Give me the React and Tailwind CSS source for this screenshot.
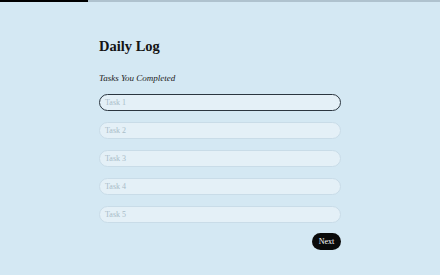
import React from "react";

export default function App() {
  const serif = { fontFamily: '"Liberation Serif", "DejaVu Serif", serif' };
  return (
    <div className="w-[440px] h-[275px] bg-[#d4e8f3] overflow-hidden" style={serif}>
      <div className="flex h-[2px] w-full bg-[#afc2ce]">
        <div className="h-full w-[88px] bg-black" />
      </div>
      <div className="mx-auto w-[242px] pt-[34px]">
        <h1 className="text-[14.5px] leading-[20px] font-bold text-[#141414]">Daily Log</h1>
        <p className="mt-[16px] text-[9px] leading-[12px] italic text-[#1a1a1a]">Tasks You Completed</p>
        <div className="mt-[10px] flex flex-col gap-[11px]">
          {[1, 2, 3, 4, 5].map((n) => (
            <div
              key={n}
              className={
                n === 1
                  ? "flex h-[17px] items-center rounded-full border-[1.5px] border-[#2b3640] bg-[#e4f0f7] px-[5px]"
                  : "flex h-[17px] items-center rounded-full border border-[#c9dce8] bg-[#e4f0f7] px-[5px]"
              }
            >
              <span className="text-[8px] leading-none text-[#a9bcc8]">Task {n}</span>
            </div>
          ))}
        </div>
        <div className="mt-[10px] flex justify-end">
          <button className="flex h-[17px] w-[29px] items-center justify-center rounded-full bg-[#0a0a0a] text-[8px] text-white">
            Next
          </button>
        </div>
      </div>
    </div>
  );
}
